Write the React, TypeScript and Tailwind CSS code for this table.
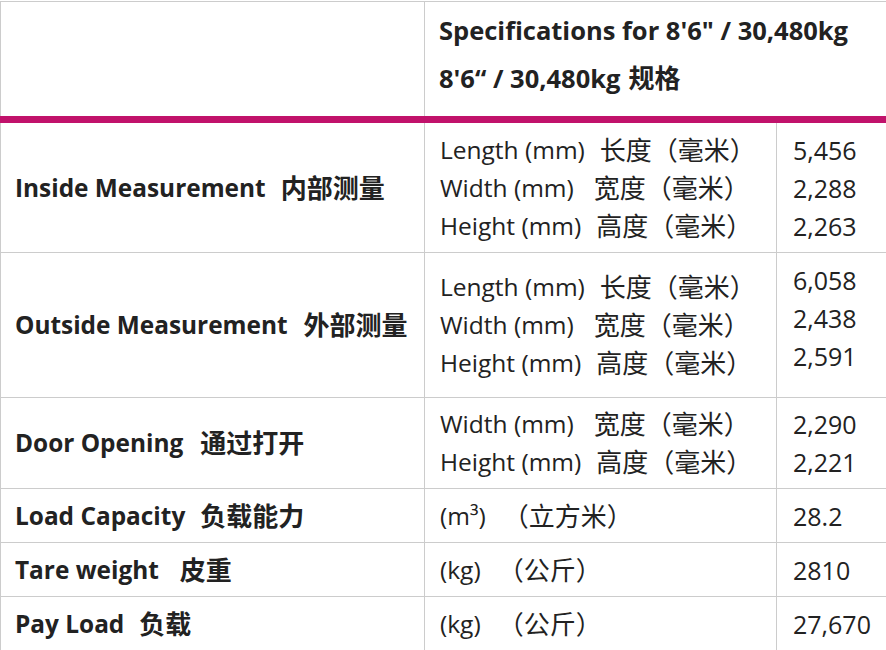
import React from 'react';

type Line = { en: string; gap: number; zh: string; value: string };
type Row = { en: string; gap: number; zh: string; lines: Line[]; rowClass: string; valueClass?: string };

const rows: Row[] = [
  {
    en: 'Inside Measurement', gap: 15, zh: '内部测量', rowClass: 'h-[133px]',
    lines: [
      { en: 'Length (mm)', gap: 15, zh: '长度（毫米）', value: '5,456' },
      { en: 'Width (mm)', gap: 20, zh: '宽度（毫米）', value: '2,288' },
      { en: 'Height (mm)', gap: 15, zh: '高度（毫米）', value: '2,263' },
    ],
  },
  {
    en: 'Outside Measurement', gap: 16, zh: '外部测量', rowClass: 'h-[145px]', valueClass: 'align-top pt-[8px]',
    lines: [
      { en: 'Length (mm)', gap: 15, zh: '长度（毫米）', value: '6,058' },
      { en: 'Width (mm)', gap: 20, zh: '宽度（毫米）', value: '2,438' },
      { en: 'Height (mm)', gap: 15, zh: '高度（毫米）', value: '2,591' },
    ],
  },
  {
    en: 'Door Opening', gap: 17, zh: '通过打开', rowClass: 'h-[91px]',
    lines: [
      { en: 'Width (mm)', gap: 20, zh: '宽度（毫米）', value: '2,290' },
      { en: 'Height (mm)', gap: 15, zh: '高度（毫米）', value: '2,221' },
    ],
  },
  {
    en: 'Load Capacity', gap: 15, zh: '负载能力', rowClass: 'h-[54px]',
    lines: [{ en: '(m³)', gap: 17, zh: '（立方米）', value: '28.2' }],
  },
  {
    en: 'Tare weight', gap: 21, zh: '皮重', rowClass: 'h-[54px]',
    lines: [{ en: '(kg)', gap: 17, zh: '（公斤）', value: '2810' }],
  },
  {
    en: 'Pay Load', gap: 15, zh: '负载', rowClass: 'h-[54px]',
    lines: [{ en: '(kg)', gap: 17, zh: '（公斤）', value: '27,670' }],
  },
];

const cell = 'border border-[#cccccc] pr-[12px] py-0 align-middle';

export default function App() {
  return (
    <div
      className="w-[886px] h-[650px] overflow-hidden bg-white pt-px text-[#222222] text-[24.5px] leading-[38px]"
      style={{ fontFamily: '"Open Sans", "Noto Sans CJK SC", sans-serif' }}
    >
      <table className="table-fixed border-collapse w-[980px]">
        <colgroup>
          <col className="w-[424px]" />
          <col className="w-[352px]" />
          <col className="w-[204px]" />
        </colgroup>
        <thead>
          <tr className="h-[118px]">
            <th className="border border-[#cccccc] border-b-[7px] border-b-[#c1126b]" />
            <th
              colSpan={2}
              className="border border-[#cccccc] border-b-[7px] border-b-[#c1126b] pl-[14px] pt-[7px] pb-0 text-left align-top text-[25.5px] font-bold whitespace-nowrap"
            >
              <div className="flex h-[42px] items-center">Specifications for 8'6" / 30,480kg</div>
              <div className="mt-[6px] flex h-[42px] items-center">
                8'6“ / 30,480kg<span className="ml-[8px] text-[26px]">规格</span>
              </div>
            </th>
          </tr>
        </thead>
        <tbody>
          {rows.map((r) => (
            <tr key={r.en} className={r.rowClass}>
              <td className={`${cell} pl-[14px] text-[24.4px] font-bold whitespace-nowrap`}>
                <div className="flex h-[38px] items-center">
                  {r.en}
                  <span className="text-[26px]" style={{ marginLeft: r.gap }}>{r.zh}</span>
                </div>
              </td>
              <td className={`${cell} pl-[15px] whitespace-nowrap`}>
                {r.lines.map((l) => (
                  <div key={l.en + l.value} className="flex h-[38px] items-center">
                    {l.en}
                    <span className="text-[26px]" style={{ marginLeft: l.gap }}>{l.zh}</span>
                  </div>
                ))}
              </td>
              <td className={`${cell} pl-[16px] text-[25px] ${r.valueClass ?? ''}`}>
                {r.lines.map((l) => (
                  <div key={l.value} className="flex h-[38px] items-center">{l.value}</div>
                ))}
              </td>
            </tr>
          ))}
        </tbody>
      </table>
    </div>
  );
}
